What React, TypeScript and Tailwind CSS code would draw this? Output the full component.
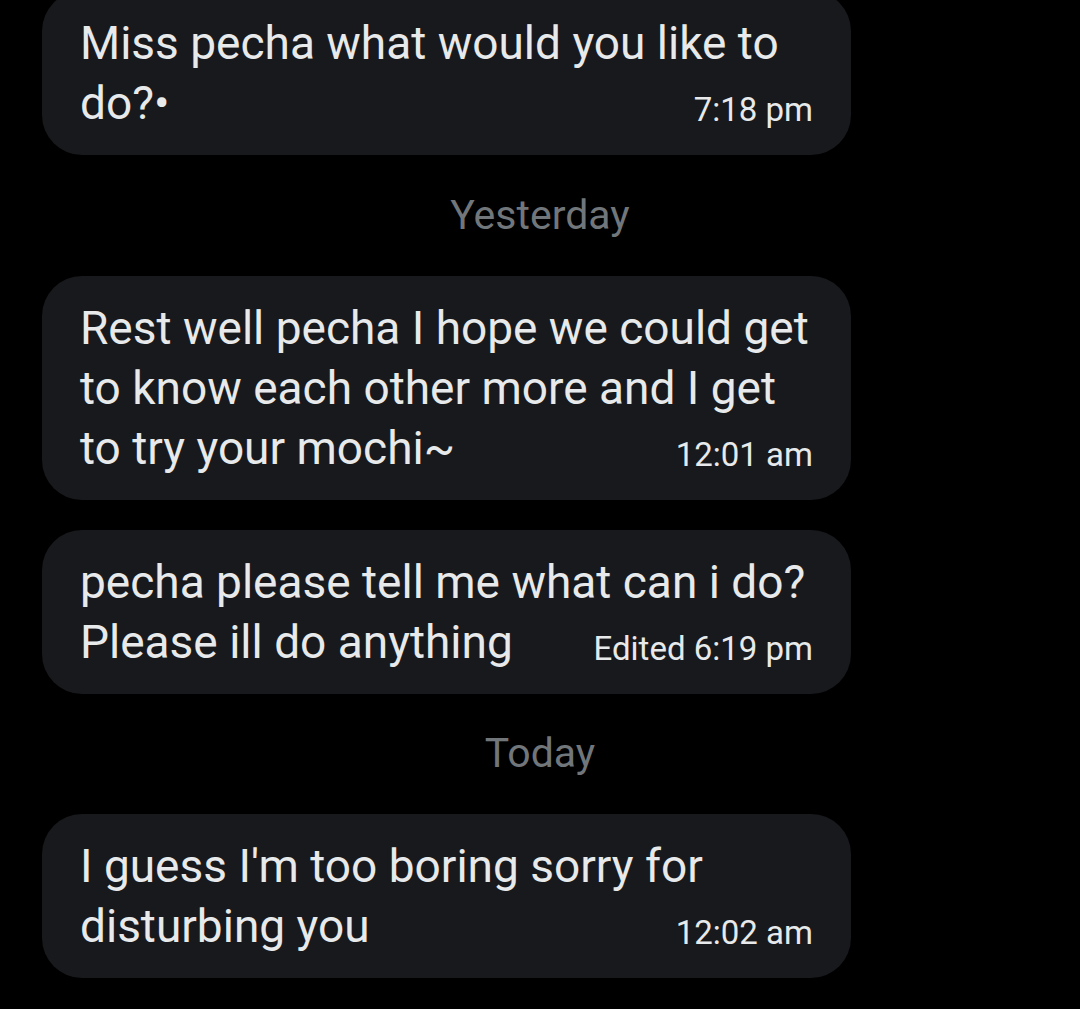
type Msg = {
  lines: string[];
  time: string;
};

const first: Msg = {
  lines: ["Miss pecha what would you like to", "do?•"],
  time: "7:18 pm",
};

const yesterday: Msg[] = [
  {
    lines: [
      "Rest well pecha I hope we could get",
      "to know each other more and I get",
      "to try your mochi~",
    ],
    time: "12:01 am",
  },
  {
    lines: ["pecha please tell me what can i do?", "Please ill do anything"],
    time: "Edited 6:19 pm",
  },
];

const today: Msg[] = [
  {
    lines: ["I guess I'm too boring sorry for", "disturbing you"],
    time: "12:02 am",
  },
];

function Bubble({ msg, className = "" }: { msg: Msg; className?: string }) {
  const last = msg.lines.length - 1;
  return (
    <div
      className={`w-[809px] rounded-[40px] bg-[#18191c] px-[38px] py-[22px] text-[#e7e9ea] ${className}`}
    >
      {msg.lines.map((line, i) =>
        i < last ? (
          <div key={i} className="h-[60px] text-[46px] leading-[60px] whitespace-nowrap">
            {line}
          </div>
        ) : (
          <div key={i} className="flex h-[60px] items-baseline justify-between">
            <span className="text-[46px] leading-[60px] whitespace-nowrap">{line}</span>
            <span className="text-[33px] leading-[60px] whitespace-nowrap translate-y-[2px]">
              {msg.time}
            </span>
          </div>
        )
      )}
    </div>
  );
}

function DayLabel({ label, h }: { label: string; h: string }) {
  return (
    <div className={`ml-[-42px] flex w-[1080px] items-center justify-center ${h}`}>
      <span className="text-[41px] text-[#71767b]">{label}</span>
    </div>
  );
}

export default function App() {
  return (
    <div
      className="h-[1009px] w-[1080px] overflow-hidden bg-black pl-[42px]"
      style={{ fontFamily: "Roboto, 'Noto Sans', sans-serif" }}
    >
      <Bubble msg={first} className="mt-[-9px]" />
      <DayLabel label="Yesterday" h="h-[121px]" />
      <div className="flex flex-col gap-[30px]">
        {yesterday.map((m, i) => (
          <Bubble key={i} msg={m} />
        ))}
      </div>
      <DayLabel label="Today" h="h-[120px]" />
      {today.map((m, i) => (
        <Bubble key={i} msg={m} />
      ))}
    </div>
  );
}
